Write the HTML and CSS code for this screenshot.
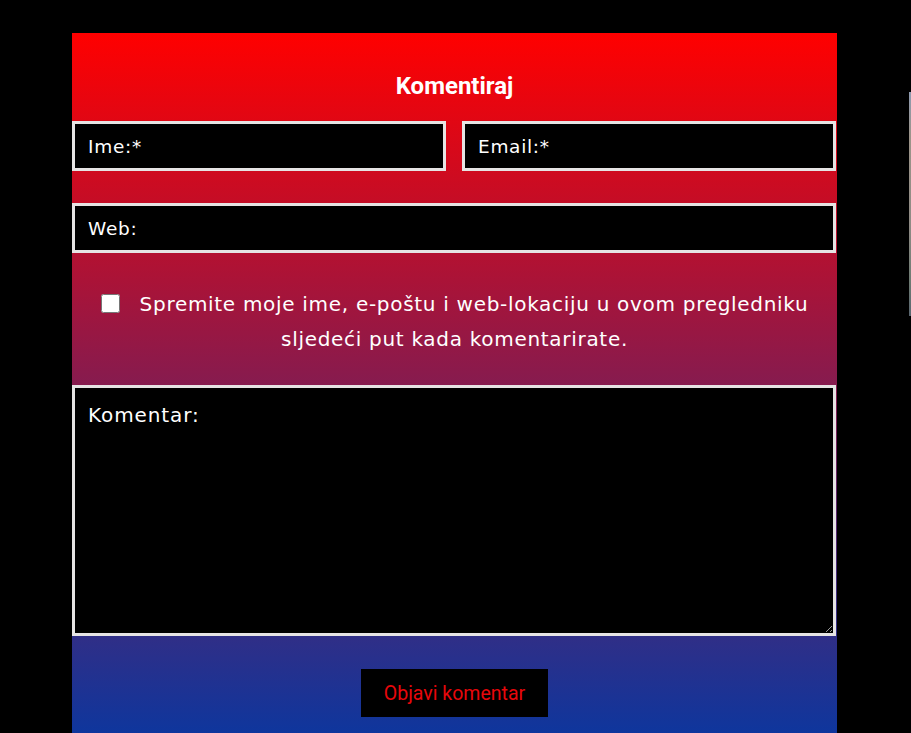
FILE: index.html
```html
<!DOCTYPE html>
<html lang="hr">
<head>
<meta charset="utf-8">
<title>Komentiraj</title>
<link rel="stylesheet" href="styles.css">
</head>
<body>
<div class="page">
  <form class="panel">
    <h3 class="title">Komentiraj</h3>
    <div class="row-two">
      <input class="field" type="text" placeholder="Ime:*">
      <input class="field" type="email" placeholder="Email:*">
    </div>
    <input class="field field-wide" type="url" placeholder="Web:">
    <p class="consent"><input class="check" type="checkbox"><span class="consent-text">Spremite moje ime, e-poštu i web-lokaciju u ovom pregledniku sljedeći put kada komentarirate.</span></p>
    <textarea class="comment" placeholder="Komentar:"></textarea>
    <div class="actions">
      <button class="submit" type="button">Objavi komentar</button>
    </div>
  </form>
  <div class="edge-strip"></div>
</div>
</body>
</html>
```

FILE: styles.css
```css
html, body {
  margin: 0;
  padding: 0;
  background: #000;
  overflow: hidden;
  height: 733px;
}

.page {
  position: relative;
  padding: 33px 0 0 72px;
}

.panel {
  width: 765px;
  box-sizing: border-box;
  height: 742px;
  background: linear-gradient(to bottom, #ff0000 0%, #0039a6 100%);
  display: flex;
  flex-direction: column;
  font-family: "DejaVu Sans", Verdana, sans-serif;
}

.title {
  margin: 0;
  padding: 39px 0 21px;
  font-family: Roboto, "Liberation Sans", sans-serif;
  font-weight: 700;
  font-size: 24px;
  line-height: 28px;
  color: #fff;
  text-align: center;
}

.row-two {
  display: flex;
  gap: 16px;
  margin-bottom: 32px;
}

.field {
  display: block;
  box-sizing: border-box;
  height: 50px;
  width: 374px;
  margin: 0;
  padding: 0 13px;
  border: 3px solid #e6e4e4;
  background: #000;
  color: #fff;
  font-family: "DejaVu Sans", Verdana, sans-serif;
  font-size: 18.5px;
  letter-spacing: 0.7px;
  outline: none;
  border-radius: 0;
}

.field-wide {
  width: 764px;
}

.field::placeholder,
.comment::placeholder {
  color: #fff;
  opacity: 1;
}

.consent {
  margin: 0;
  padding: 34px 20px 28px;
  text-align: center;
  color: #fff;
  font-size: 20px;
  letter-spacing: 0.7px;
  line-height: 35px;
}

.check {
  width: 19px;
  height: 19px;
  margin: 0 20px 0 0;
  vertical-align: -2px;
}

.comment {
  display: block;
  box-sizing: border-box;
  width: 764px;
  height: 251px;
  margin: 0;
  padding: 13px 13px;
  border: 3px solid #e6e4e4;
  background: #000;
  color: #fff;
  font-family: "DejaVu Sans", Verdana, sans-serif;
  font-size: 20px;
  letter-spacing: 0.9px;
  line-height: 28px;
  outline: none;
  border-radius: 0;
}

.actions {
  display: flex;
  justify-content: center;
  padding-top: 33px;
}

.submit {
  height: 48px;
  padding: 0 23px;
  border: none;
  border-radius: 0;
  background: #000;
  color: #e8070b;
  font-family: Roboto, "Liberation Sans", sans-serif;
  font-size: 19.5px;
  cursor: pointer;
}

.edge-strip {
  position: absolute;
  left: 909px;
  top: 92px;
  width: 2px;
  height: 224px;
  background: linear-gradient(to bottom, #8d9ab0 0%, #9c9489 20%, #8e8a84 60%, #6d7a72 85%, #5a6670 100%);
}
```
